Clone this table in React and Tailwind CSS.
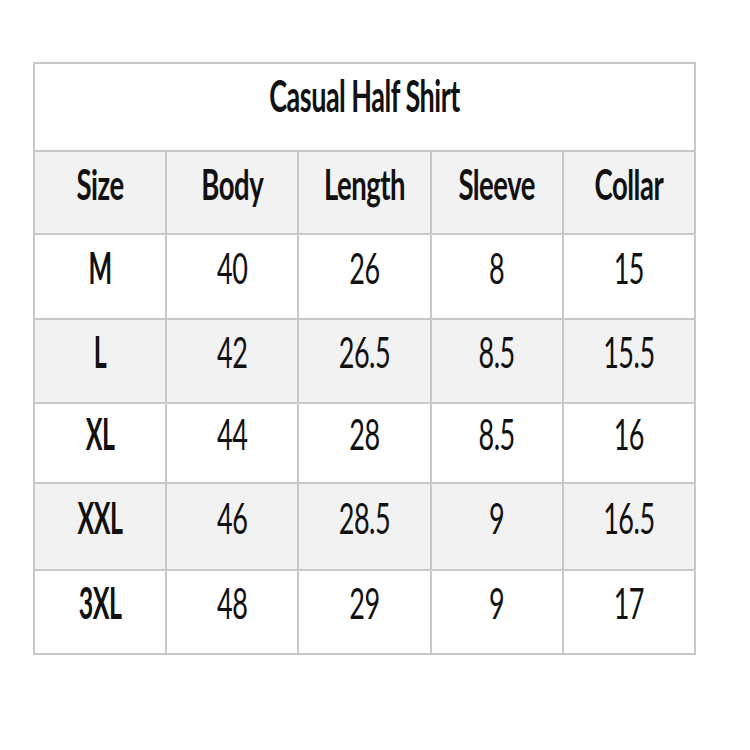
import React from 'react';

const rows = [
  { size: 'M', body: '40', length: '26', sleeve: '8', collar: '15', h: 'h-[85px]', bg: 'bg-white' },
  { size: 'L', body: '42', length: '26.5', sleeve: '8.5', collar: '15.5', h: 'h-[84px]', bg: 'bg-[#f2f2f2]' },
  { size: 'XL', body: '44', length: '28', sleeve: '8.5', collar: '16', h: 'h-[80px]', bg: 'bg-white' },
  { size: 'XXL', body: '46', length: '28.5', sleeve: '9', collar: '16.5', h: 'h-[87px]', bg: 'bg-[#f2f2f2]' },
  { size: '3XL', body: '48', length: '29', sleeve: '9', collar: '17', h: 'h-[84px]', bg: 'bg-white' },
];

const headers = ['Size', 'Body', 'Length', 'Sleeve', 'Collar'];

// the chart text is tall and narrow, so squeeze it with a vertical stretch
const styles = {
  head: 'inline-block font-bold text-[27.5px] leading-none scale-y-[1.55] tracking-[-0.5px]',
  size: 'inline-block font-bold text-[25px] leading-none scale-y-[1.75] tracking-[-0.5px]',
  data: 'inline-block text-[27px] leading-none scale-y-[1.6] tracking-[-0.5px]',
};

const Cell = ({ kind, children }) => (
  <td className="w-[133px] border-2 border-[#c8c8c8] text-center align-middle pb-[16px]">
    <span className={styles[kind]}>{children}</span>
  </td>
);

export default function App() {
  return (
    <div
      className="w-[750px] h-[750px] bg-white pt-[62px] pl-[33px] text-[#111]"
      style={{ fontFamily: 'Lato, "Open Sans", sans-serif' }}
    >
      <table className="border-collapse table-fixed w-[663px]">
        <tbody>
          <tr className="h-[88px] bg-white">
            <td colSpan={5} className="border-2 border-[#c8c8c8] text-center align-middle pb-[20px]">
              <span className="inline-block font-bold text-[27px] leading-none scale-y-[1.6] tracking-[-0.5px]">
                Casual Half Shirt
              </span>
            </td>
          </tr>
          <tr className="h-[83px] bg-[#f2f2f2]">
            {headers.map((t) => (
              <Cell key={t} kind="head">{t}</Cell>
            ))}
          </tr>
          {rows.map((r) => (
            <tr key={r.size} className={`${r.h} ${r.bg}`}>
              <Cell kind="size">{r.size}</Cell>
              <Cell kind="data">{r.body}</Cell>
              <Cell kind="data">{r.length}</Cell>
              <Cell kind="data">{r.sleeve}</Cell>
              <Cell kind="data">{r.collar}</Cell>
            </tr>
          ))}
        </tbody>
      </table>
    </div>
  );
}
